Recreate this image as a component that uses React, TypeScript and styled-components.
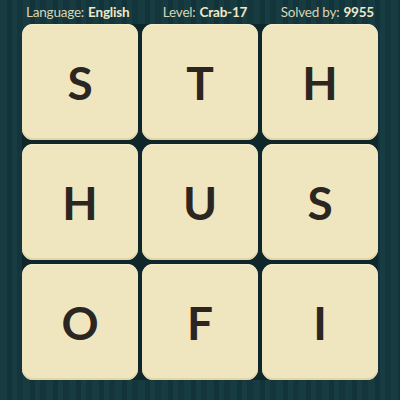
import React from 'react';
import styled, {createGlobalStyle} from 'styled-components';

const GlobalStyle = createGlobalStyle`
  html, body {
    margin: 0;
    padding: 0;
  }
  body {
    font-family: Lato, 'Open Sans', sans-serif;
  }
`;

const Page = styled.div`
  width: 400px;
  height: 400px;
  box-sizing: border-box;
  background-color: #14373c;
  background-image: repeating-linear-gradient(
    90deg,
    #163b40 0px,
    #163b40 7px,
    #12333a 7px,
    #12333a 12px,
    #173d42 12px,
    #173d42 17px,
    #13353b 17px,
    #13353b 23px
  );
  display: flex;
  flex-direction: column;
  align-items: center;
  overflow: hidden;
`;

const Header = styled.div`
  width: 356px;
  height: 24px;
  display: flex;
  align-items: center;
  justify-content: space-between;
  padding: 0 4px 0 4px;
  box-sizing: border-box;
  font-size: 13.5px;
  letter-spacing: -0.2px;
`;

const Label = styled.span`
  font-weight: 400;
  color: #d9d4b4;
`;

const Value = styled.span`
  font-weight: 700;
  color: #f0e8c6;
  margin-left: 4px;
`;

const Board = styled.div`
  display: grid;
  grid-template-columns: repeat(3, 116px);
  grid-template-rows: repeat(3, 116px);
  gap: 4px;
  background: #0f262b;
  border-radius: 12px;
`;

const Tile = styled.div`
  background: #efe6bf;
  border-radius: 11px;
  box-shadow: inset 0 -2px 0 #e2d6a8, inset 0 1px 0 #f4edcc;
  display: flex;
  align-items: center;
  justify-content: center;
  color: #2b2621;
  font-family: Lato, 'Open Sans', sans-serif;
  font-weight: 700;
  font-size: 46px;
  line-height: 1;
  padding-top: 2px;
  box-sizing: border-box;
`;

const letters = ['S', 'T', 'H', 'H', 'U', 'S', 'O', 'F', 'I'];

export default function App() {
  return (
    <Page>
      <GlobalStyle />
      <Header>
        <span>
          <Label>Language:</Label>
          <Value>English</Value>
        </span>
        <span>
          <Label>Level:</Label>
          <Value>Crab-17</Value>
        </span>
        <span>
          <Label>Solved by:</Label>
          <Value>9955</Value>
        </span>
      </Header>
      <Board>
        {letters.map((l, i) => (
          <Tile key={i}>{l}</Tile>
        ))}
      </Board>
    </Page>
  );
}
